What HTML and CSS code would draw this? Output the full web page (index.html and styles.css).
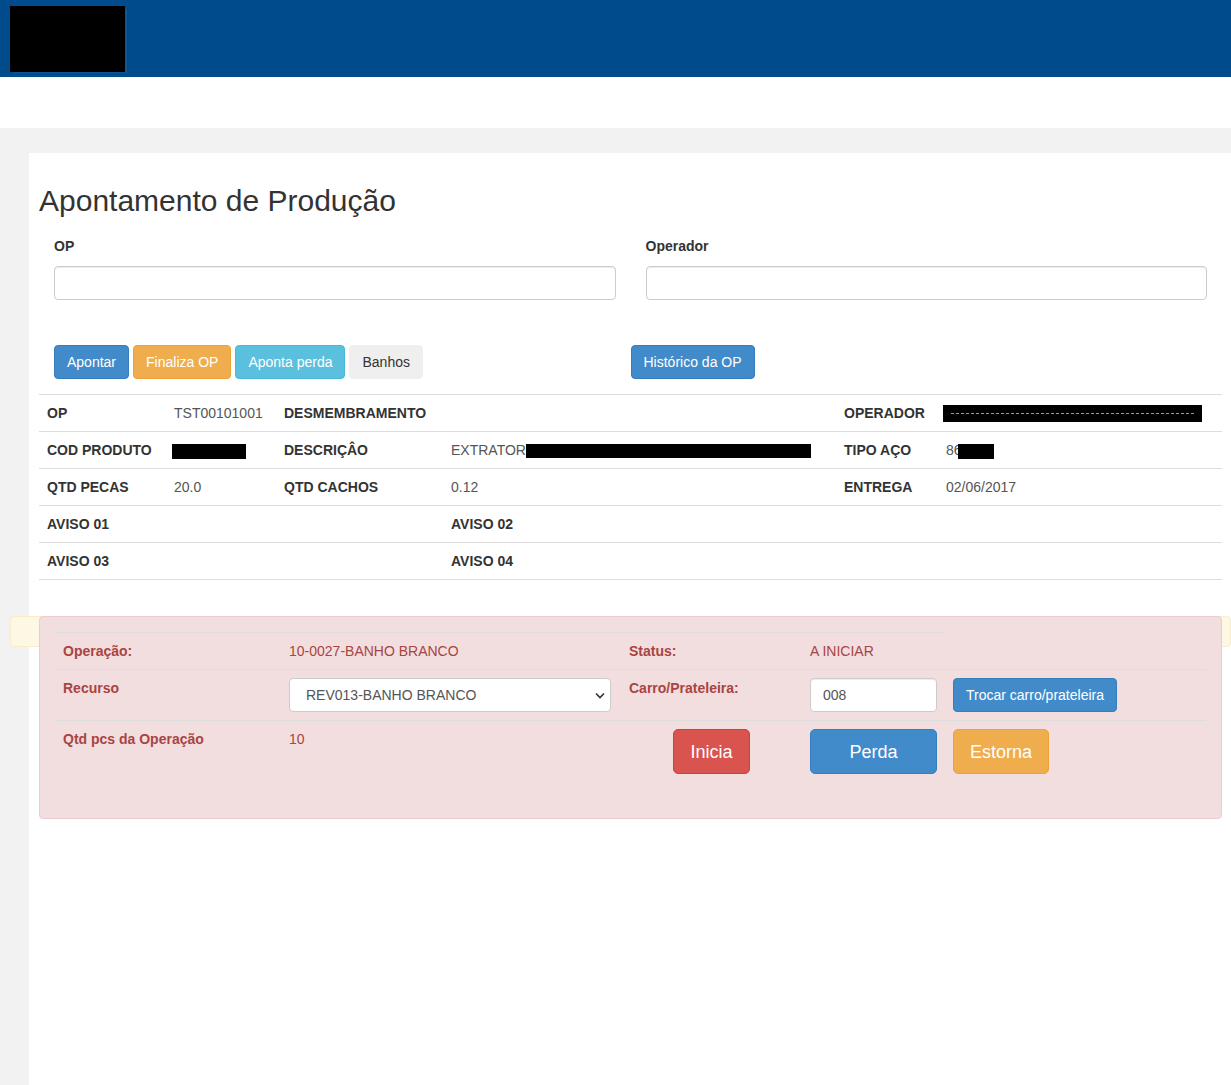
FILE: index.html
```html
<!DOCTYPE html>
<html lang="pt-BR">
<head>
<meta charset="utf-8">
<title>Apontamento de Produção</title>
<link rel="stylesheet" href="styles.css">
</head>
<body>
<header class="topbar">
  <div class="logo"></div>
</header>
<div class="subbar"></div>
<main class="page">
  <section class="panel">
    <h1 class="title">Apontamento de Produção</h1>

    <div class="form-row">
      <div class="field">
        <label class="field-label">OP</label>
        <input class="form-control" type="text">
      </div>
      <div class="field">
        <label class="field-label">Operador</label>
        <input class="form-control" type="text">
      </div>
    </div>

    <div class="actions-row">
      <div class="actions-left">
        <button class="btn btn-primary">Apontar</button>
        <button class="btn btn-warning">Finaliza OP</button>
        <button class="btn btn-info">Aponta perda</button>
        <button class="btn btn-light">Banhos</button>
      </div>
      <div class="actions-right">
        <button class="btn btn-primary">Histórico da OP</button>
      </div>
    </div>

    <table class="info-table">
      <colgroup>
        <col class="c1"><col class="c2"><col class="c3"><col class="c4"><col class="c5"><col class="c6">
      </colgroup>
      <tr>
        <th>OP</th><td>TST00101001</td>
        <th>DESMEMBRAMENTO</th><td></td>
        <th>OPERADOR</th><td><span class="redact redact-op"><span class="redact-line"></span></span></td>
      </tr>
      <tr>
        <th>COD PRODUTO</th><td><span class="redact redact-cod"></span></td>
        <th>DESCRIÇÂO</th><td>EXTRATOR<span class="redact redact-desc"></span></td>
        <th>TIPO AÇO</th><td>86<span class="redact redact-tipo"></span></td>
      </tr>
      <tr>
        <th>QTD PECAS</th><td>20.0</td>
        <th>QTD CACHOS</th><td>0.12</td>
        <th>ENTREGA</th><td>02/06/2017</td>
      </tr>
      <tr>
        <th colspan="3">AVISO 01</th>
        <th colspan="3">AVISO 02</th>
      </tr>
      <tr>
        <th colspan="3">AVISO 03</th>
        <th colspan="3">AVISO 04</th>
      </tr>
    </table>

    <div class="alert-wrap">
      <div class="warning-strip"></div>
      <div class="alert-danger">
        <table class="op-table">
          <colgroup>
            <col class="o1"><col class="o2"><col class="o3"><col class="o4"><col class="o5">
          </colgroup>
          <tr>
            <th>Operação:</th>
            <td>10-0027-BANHO BRANCO</td>
            <th>Status:</th>
            <td>A INICIAR</td>
          </tr>
          <tr>
            <th>Recurso</th>
            <td>
              <div class="select-wrap">
                <select class="form-select">
                  <option>REV013-BANHO BRANCO</option>
                </select>
                <svg class="chevron" width="10" height="7" viewBox="0 0 10 7"><path d="M1 1.5 L5 5.5 L9 1.5" fill="none" stroke="#333" stroke-width="1.6"/></svg>
              </div>
            </td>
            <th>Carro/Prateleira:</th>
            <td><input class="form-control small-input" type="text" value="008"></td>
            <td><button class="btn btn-primary">Trocar carro/prateleira</button></td>
          </tr>
          <tr>
            <th>Qtd pcs da Operação</th>
            <td>10</td>
            <td class="center"><button class="btn btn-lg btn-danger">Inicia</button></td>
            <td><button class="btn btn-lg btn-primary btn-block">Perda</button></td>
            <td><button class="btn btn-lg btn-warning">Estorna</button></td>
          </tr>
        </table>
      </div>
    </div>
  </section>
</main>
</body>
</html>
```
FILE: styles.css
```css
* { box-sizing: border-box; }

html, body {
  margin: 0;
  padding: 0;
}

body {
  font-family: "Liberation Sans", Arial, Helvetica, sans-serif;
  font-size: 14px;
  line-height: 20px;
  color: #333;
  background: #fff;
  overflow: hidden;
}

.topbar {
  height: 77px;
  background: #004b8c;
  padding: 6px 10px;
}

.logo {
  width: 115px;
  height: 66px;
  background: #000;
  box-shadow: 3px 2px 0 -1px #0d5593;
}

.subbar {
  height: 51px;
  background: #fff;
}

.page {
  background: #f2f2f2;
  padding: 25px 0 0 29px;
}

.panel {
  background: #fff;
  min-height: 932px;
  padding: 1px 9px 0 10px;
  position: relative;
}

.title {
  font-size: 30px;
  font-weight: 400;
  line-height: 33px;
  margin: 30px 0 0 0;
  color: #333;
}

.form-row {
  display: grid;
  grid-template-columns: 1fr 1fr;
  margin-top: 19px;
}

.field {
  padding: 0 15px;
}

.field-label {
  display: block;
  font-weight: 700;
  line-height: 20px;
  margin-bottom: 10px;
}

.form-control {
  display: block;
  width: 100%;
  height: 34px;
  padding: 6px 12px;
  font-family: inherit;
  font-size: 14px;
  line-height: 20px;
  color: #555;
  background: #fff;
  border: 1px solid #ccc;
  border-radius: 4px;
  box-shadow: inset 0 1px 1px rgba(0,0,0,0.075);
}

.actions-row {
  display: grid;
  grid-template-columns: 1fr 1fr;
  margin-top: 45px;
}

.actions-left {
  display: flex;
  gap: 4px;
  padding-left: 15px;
}

.actions-right {
  display: flex;
}

.btn {
  display: inline-block;
  font-family: inherit;
  font-size: 14px;
  line-height: 20px;
  padding: 6px 12px;
  border: 1px solid transparent;
  border-radius: 4px;
  color: #fff;
  white-space: nowrap;
  cursor: pointer;
  text-align: center;
}

.btn-lg {
  font-size: 18px;
  line-height: 24px;
  padding: 10px 16px 9px;
  border-radius: 5px;
}

.btn-block {
  display: block;
  width: 100%;
}

.btn-primary { background: #428bca; border-color: #357ebd; }
.btn-warning { background: #f0ad4e; border-color: #eea236; }
.btn-info { background: #5bc0de; border-color: #46b8da; }
.btn-danger { background: #d9534f; border-color: #d43f3a; }
.btn-light { background: #efefef; border-color: #efefef; color: #333; }

.info-table {
  width: 100%;
  margin-top: 15px;
  border-collapse: collapse;
  table-layout: fixed;
  border-bottom: 1px solid #ddd;
}

.info-table .c1 { width: 127px; }
.info-table .c2 { width: 110px; }
.info-table .c3 { width: 167px; }
.info-table .c4 { width: 393px; }
.info-table .c5 { width: 102px; }
.info-table .c6 { width: 284px; }

.info-table th,
.info-table td {
  padding: 8px;
  border-top: 1px solid #ddd;
  text-align: left;
  vertical-align: top;
  white-space: nowrap;
  line-height: 20px;
}

.info-table th { font-weight: 700; color: #333; }
.info-table td { color: #555; }

.redact {
  display: inline-block;
  background: #000;
  vertical-align: top;
}

.redact-op {
  width: 259px;
  height: 17px;
  margin: 2px 0 0 -3px;
  position: relative;
}

.redact-line {
  display: block;
  margin: 8px 8px 0 8px;
  border-top: 1px dashed #999;
}

.redact-cod {
  width: 74px;
  height: 15px;
  margin: 4px 0 0 -2px;
}

.redact-desc {
  width: 285px;
  height: 14px;
  margin-top: 4px;
}

.redact-tipo {
  width: 36px;
  height: 15px;
  margin: 4px 0 0 -4px;
}

.alert-wrap {
  position: relative;
  margin-top: 36px;
}

.warning-strip {
  position: absolute;
  top: 0;
  left: -29px;
  right: -9px;
  height: 31px;
  background: #fcf8e3;
  border: 1px solid #faebcc;
  border-radius: 4px;
}

.alert-danger {
  position: relative;
  background: #f2dede;
  border: 1px solid #ebccd1;
  border-radius: 4px;
  padding: 15px;
  color: #a94442;
}

.op-table {
  width: 100%;
  border-collapse: collapse;
  table-layout: fixed;
  margin-bottom: 21px;
}

.op-table .o1 { width: 226px; }
.op-table .o2 { width: 340px; }
.op-table .o3 { width: 181px; }
.op-table .o4 { width: 143px; }
.op-table .o5 { width: 261px; }

.op-table th,
.op-table td {
  padding: 8px;
  border-top: 1px solid #ddd;
  text-align: left;
  vertical-align: top;
  line-height: 20px;
  white-space: nowrap;
}

.op-table th { font-weight: 700; color: #a94442; }
.op-table td { color: #a94442; }
.op-table td.center { text-align: center; }

.select-wrap {
  position: relative;
  width: 322px;
}

.form-select {
  display: block;
  width: 100%;
  height: 34px;
  padding: 6px 12px 6px 16px;
  font-family: inherit;
  font-size: 14px;
  color: #555;
  background: #fff;
  border: 1px solid #ccc;
  border-radius: 4px;
  -webkit-appearance: none;
  appearance: none;
}

.chevron {
  position: absolute;
  right: 6px;
  top: 14px;
  pointer-events: none;
}

.small-input {
  width: 100%;
}
```
